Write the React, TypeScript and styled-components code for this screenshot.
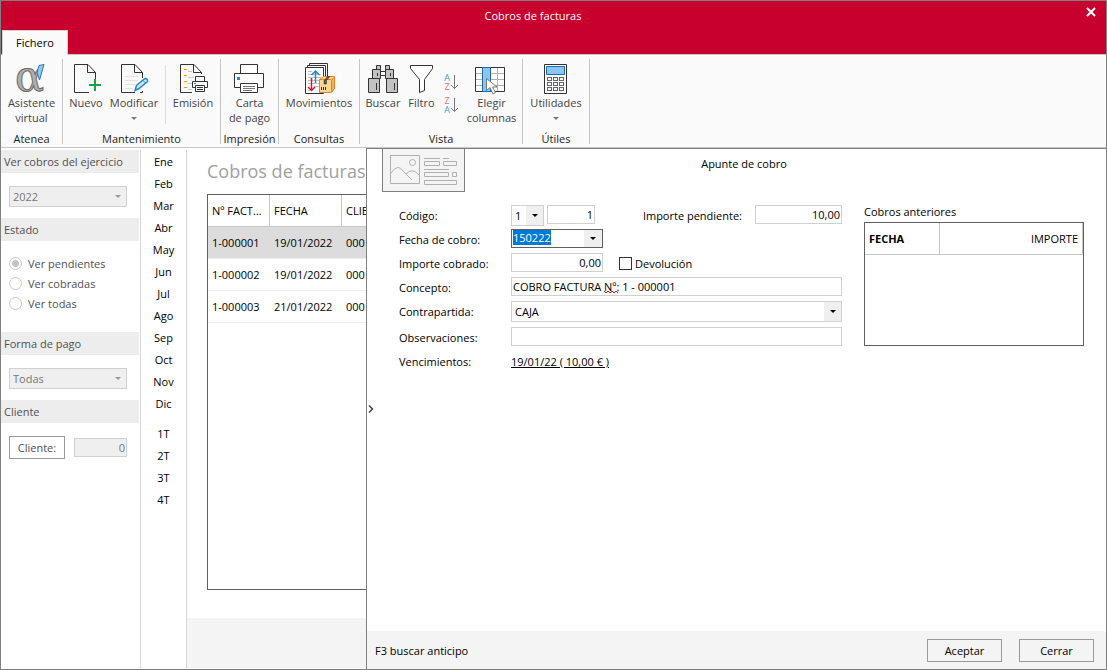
import React, { useEffect, useRef } from "react";
import styled, { createGlobalStyle } from "styled-components";

const GlobalStyle = createGlobalStyle`
  *, *::before, *::after { box-sizing: border-box; }
  body { margin: 0; }
  body, button, input, select, table {
    font-family: "Open Sans", "Noto Sans", sans-serif;
    font-size: 11px;
    line-height: 15px;
    color: #000;
  }
  button { padding: 0; margin: 0; border: 0; background: none; }
`;

/* ---------- window frame ---------- */

const Window = styled.div`
  display: flex;
  flex-direction: column;
  min-height: 100vh;
  border: 1px solid #808080;
  background: #fff;
`;

const Header = styled.header`
  background: #c8002d;
`;

const TitleBar = styled.div`
  display: grid;
  grid-template-columns: 1fr 41px;
  height: 29px;
`;

const WindowTitle = styled.h1`
  margin: 0;
  font-size: 11px;
  font-weight: 400;
  line-height: 30px;
  text-align: center;
  color: #fff;
`;

const CloseButton = styled.button`
  display: flex;
  align-items: center;
  justify-content: center;
  justify-self: end;
  width: 30px;
  height: 22px;
`;

const TabRow = styled.nav`
  display: flex;
  height: 24px;
  padding-left: 1px;
`;

const Tab = styled.button`
  position: relative;
  width: 66px;
  height: 25px;
  padding-bottom: 2px;
  border: 1px solid #d0d0d0;
  border-bottom: 0;
  background: #fafafa;
`;

/* ---------- ribbon ---------- */

const Ribbon = styled.div`
  display: flex;
  border-top: 1px solid #c6c6c6;
  border-bottom: 1px solid #c6c6c6;
  background: #fafafa;
`;

const RibbonGroup = styled.section<{ $endGap?: number }>`
  display: flex;
  flex-direction: column;
  padding-top: 8px;
`;

const RibbonItems = styled.div<{ $endGap?: number }>`
  display: flex;
  height: 68px;
  padding-right: ${(p) => p.$endGap ?? 0}px;
`;

const GroupName = styled.h2`
  margin: 0;
  font-size: 11px;
  font-weight: 400;
  line-height: 16px;
  text-align: center;
  white-space: nowrap;
  color: #222;
`;

const GroupDivider = styled.div`
  width: 1px;
  margin: 4px 0 3px;
  background: #c6c6c6;
`;

const ItemDivider = styled.div`
  width: 1px;
  margin: 2px 0 7px 6px;
  background: #dcdcdc;
`;

const RibbonButton = styled.button<{ $width: number }>`
  display: flex;
  flex-direction: column;
  align-items: center;
  width: ${(p) => p.$width}px;
  white-space: nowrap;
  color: #444;

  svg { flex: none; overflow: visible; }
`;

const MoreArrow = styled.i`
  margin-top: 7px;
  border: 3px solid transparent;
  border-top-color: #777;
  border-bottom: 0;
`;

const SortButtons = styled.div`
  display: flex;
  flex-direction: column;
  align-items: center;
  gap: 5px;
  width: 30px;
  padding-top: 10px;
`;

const SortButton = styled.button`
  width: 18px;
  height: 18px;

  svg { display: block; overflow: visible; }
`;

/* ---------- body ---------- */

const Body = styled.main`
  display: grid;
  grid-template-columns: 140px 46px 179px minmax(0, 1fr);
  flex: 1;
`;

const Filters = styled.aside`
  margin: 2px 0 1px;
  border-right: 1px solid #d8d8d8;
`;

const FilterTitle = styled.h3`
  margin: 0 1px 0 0;
  padding-left: 3px;
  font-size: 11px;
  font-weight: 400;
  line-height: 23px;
  color: #505050;
  background: #ededed;
`;

const FilterBody = styled.div<{ $top?: number; $bottom: number }>`
  padding: ${(p) => p.$top ?? 13}px 13px ${(p) => p.$bottom}px 8px;
`;

const RadioLabel = styled.label`
  display: flex;
  align-items: center;
  gap: 6px;
  height: 20px;
  color: #505050;
`;

const Radio = styled.input`
  appearance: none;
  width: 13px;
  height: 13px;
  margin: 0;
  border: 1px solid #c8c8c8;
  border-radius: 50%;
  background: #fff;

  &:checked {
    background: radial-gradient(circle, #c4c4c4 0 3px, #fff 4px);
  }
`;

const ClientRow = styled.div`
  display: flex;
  align-items: center;
  justify-content: space-between;
`;

const OutlineButton = styled.button<{ $width: number; $muted?: boolean }>`
  width: ${(p) => p.$width}px;
  height: 23px;
  border: 1px solid #9a9a9a;
  background: ${(p) => (p.$muted ? "#fff" : "#f4f4f4")};
  color: ${(p) => (p.$muted ? "#505050" : "#000")};
`;

const Periods = styled.nav`
  display: flex;
  flex-direction: column;
  gap: 8px;
  margin: 2px 0 1px;
  border-right: 1px solid #d8d8d8;
`;

const PeriodGroup = styled.div`
  display: flex;
  flex-direction: column;
`;

const Period = styled.button`
  height: 22px;
`;

/* ---------- invoice list ---------- */

const ListPane = styled.section`
  display: flex;
  flex-direction: column;
  overflow: hidden;
  padding-bottom: 1px;
`;

const ListTitle = styled.h2`
  margin: 11px 0;
  padding-left: 20px;
  font-size: 18px;
  font-weight: 400;
  line-height: 24px;
  white-space: nowrap;
  color: #a0a0a0;
`;

const ListFrame = styled.div`
  flex: 1;
  margin: 0 0 28px 20px;
  border: 1px solid #606060;
  border-right: 0;
  overflow: hidden;
`;

const InvoiceTable = styled.table`
  width: 360px;
  table-layout: fixed;
  border-collapse: separate;
  border-spacing: 0;

  th, td {
    height: 32px;
    padding: 0 4px 1px;
    font-weight: 400;
    text-align: left;
    white-space: nowrap;
    overflow: hidden;
    text-overflow: ellipsis;
    border-bottom: 1px solid #ececec;
  }
  th {
    border-right: 1px solid #c6c6c6;
    border-bottom-color: #c6c6c6;
  }
`;

const InvoiceRow = styled.tr<{ $selected?: boolean }>`
  background: ${(p) => (p.$selected ? "#dcdcdc" : "#fff")};
`;

const ListFooter = styled.div`
  height: 50px;
  background: #f4f4f4;
`;

/* ---------- payment drawer ---------- */

const Drawer = styled.section`
  display: flex;
  flex-direction: column;
  border-top: 1px solid #808080;
  border-left: 1px solid #808080;
`;

const DrawerMain = styled.div`
  display: grid;
  grid-template-columns: 15px minmax(0, 1fr);
  flex: 1;
`;

const CollapseHandle = styled.button`
  display: flex;
  align-items: center;
  padding: 38px 0 0 1px;
`;

const DrawerHeader = styled.div`
  display: grid;
  margin-bottom: 13px;

  > * { grid-area: 1 / 1; }
`;

const DrawerTitle = styled.h2`
  margin: 7px 0 0;
  font-size: 11px;
  font-weight: 400;
  line-height: 16px;
  text-align: center;
`;

const PreviewBadge = styled.div`
  width: 83px;
  height: 43px;
  border: 1px solid #808080;
  border-top: 0;
  background: #f4f4f4;

  svg { display: block; }
`;

const DrawerColumns = styled.div`
  display: flex;
  gap: 22px;
  padding: 0 22px 0 17px;
`;

const Form = styled.form`
  flex: 1;
  min-width: 0;
`;

const FormRow = styled.div<{ $tall?: boolean }>`
  display: flex;
  align-items: flex-start;
  height: ${(p) => (p.$tall ? 26 : 24)}px;
`;

const Label = styled.label`
  flex: none;
  width: 112px;
  line-height: 22px;
`;

const PendingLabel = styled.label`
  margin: 0 13px 0 auto;
  line-height: 22px;
`;

const Field = styled.input<{ $width?: number; $right?: boolean; $muted?: boolean }>`
  ${(p) => (p.$width ? `width: ${p.$width}px;` : "flex: 1; min-width: 0;")}
  height: 19px;
  padding: 0 1px 1px;
  border: 1px solid #d0d0d0;
  border-radius: 0;
  outline: 0;
  background: ${(p) => (p.$muted ? "#efefef" : "#fff")};
  color: ${(p) => (p.$muted ? "#777" : "#000")};
  text-align: ${(p) => (p.$right ? "right" : "left")};
`;

const CodeFields = styled.div`
  display: flex;
  align-items: flex-start;
  gap: 3px;
`;

const ConceptBox = styled.div`
  position: relative;
  display: flex;
  flex: 1;
`;

const Squiggle = styled.svg`
  position: absolute;
  left: 93px;
  top: 13px;
`;

const SelectBox = styled.div<{ $width?: number; $muted?: boolean }>`
  display: grid;
  grid-template-columns: minmax(0, 1fr) 17px;
  align-items: center;
  ${(p) => (p.$width ? `width: ${p.$width}px;` : "flex: 1;")}
  height: 21px;
  border: 1px solid #d0d0d0;
  background: ${(p) => (p.$muted ? "#efefef" : "#fff")};
`;

const Select = styled.select<{ $muted?: boolean }>`
  grid-area: 1 / 1 / 2 / 3;
  appearance: none;
  width: 100%;
  height: 19px;
  margin: 0;
  padding: 0 3px;
  border: 0;
  border-radius: 0;
  outline: 0;
  background: transparent;
  opacity: 1;
  color: ${(p) => (p.$muted ? "#777" : "#000")};
`;

const SelectArrow = styled.span<{ $muted?: boolean }>`
  grid-area: 1 / 2;
  display: flex;
  align-items: center;
  justify-content: center;
  height: 100%;
  background: #efefef;
  pointer-events: none;

  &::after {
    content: "";
    border: 3px solid transparent;
    border-top-color: ${(p) => (p.$muted ? "#999" : "#000")};
    border-bottom: 0;
  }
`;

const DateBox = styled.div`
  display: grid;
  grid-template-columns: minmax(0, 1fr) 18px;
  width: 92px;
  height: 19px;
  border: 1px solid #606060;
`;

const DateInput = styled.input`
  height: 15px;
  margin: 0;
  padding: 0 1px;
  border: 0;
  outline: 0;

  &::selection { background: #0078d7; color: #fff; }
`;

const DateButton = styled.button`
  display: grid;
  background: #efefef;

  &::after {
    content: "";
    place-self: center;
    border: 3px solid transparent;
    border-top-color: #000;
    border-bottom: 0;
  }
`;

const CheckLabel = styled.label`
  display: flex;
  align-items: center;
  gap: 3px;
  height: 21px;
  margin-left: 16px;
`;

const Checkbox = styled.input`
  appearance: none;
  width: 13px;
  height: 13px;
  margin: 0;
  border: 1px solid #333;
  background: #fff;
`;

const DueLink = styled.a`
  line-height: 22px;
  color: #000;
  text-decoration: underline;
`;

const Previous = styled.div`
  flex: none;
  width: 220px;
`;

const PreviousTitle = styled.h3`
  margin: 0 0 3px;
  font-size: 11px;
  font-weight: 400;
  line-height: 14px;
`;

const PreviousFrame = styled.div`
  height: 124px;
  border: 1px solid #606060;
`;

const PreviousTable = styled.table`
  width: 100%;
  table-layout: fixed;
  border-collapse: separate;
  border-spacing: 0;
`;

const PreviousHead = styled.th<{ $strong?: boolean }>`
  width: ${(p) => (p.$strong ? "75px" : "auto")};
  height: 32px;
  padding: 0 4px;
  border-right: 1px solid #c6c6c6;
  border-bottom: 1px solid #c6c6c6;
  font-weight: ${(p) => (p.$strong ? 700 : 400)};
  text-align: ${(p) => (p.$strong ? "left" : "right")};
`;

const DrawerFooter = styled.footer`
  display: flex;
  align-items: center;
  gap: 17px;
  height: 38px;
  padding: 0 12px 0 8px;
  background: #f4f4f4;
`;

const Hint = styled.span`
  flex: 1;
`;

/* ---------- icons ---------- */

type IconProps = { w?: number; children: React.ReactNode };

const Icon = ({ w = 32, children }: IconProps) => (
  <svg width={w} height={32} viewBox={`0 0 ${w} 32`} fill="none" stroke="#333" aria-hidden="true">
    {children}
  </svg>
);

const AlphaIcon = () => (
  <Icon w={31}>
    <text
      x="-1" y="28" fontSize="43" fontFamily="DejaVu Serif, serif"
      fill="#b0b0b0" stroke="#6a6a6a" strokeWidth="1"
    >α</text>
    <path d="M23 2.500 28 1.500 23.500 17 21 9.500Z" fill="#8fcaf5" stroke="#2a74b5" />
  </Icon>
);

const NewIcon = () => (
  <Icon>
    <path d="M19 29.500H4.500V1.500H18L25.500 9.500V17M17.500 1.500V9.500H25.500" />
    <path d="M19 22H31M25 16V28" stroke="#16a34a" strokeWidth="2" />
  </Icon>
);

const EditIcon = () => (
  <Icon>
    <path d="M17 29.500H3.500V1.500H17L24.500 9.500V15M16.500 1.500V9.500H24.500M24.500 28V29.500H22" />
    <path d="M7 13.500H20M7 17.500H20M7 21.500H17M7 25.500H15" stroke="#e2e2e2" />
    <path d="M17 27.500 18.500 22.500 27 15.500Q30 15.500 29.500 18.500L21 25.500Z" fill="#cde6f8" stroke="#2b87c8" strokeWidth="1.500" />
    <path d="M25 17.500 27.500 20" stroke="#2b87c8" />
  </Icon>
);

const EmitIcon = () => (
  <Icon>
    <path d="M15 29.500H3.500V1.500H17L24.500 9.500V11M16.500 1.500V9.500H24.500" />
    <path d="M7 6.500H10M7 12.500H10M7 18.500H10M7 24.500H10" stroke="#f09a1a" />
    <path d="M11 8.500H15M11 14.500H17M11 20.500H15M11 26.500H15" stroke="#c8c8c8" />
    <path d="M18.500 18V13.500H27.500V18M18.500 24.500H15.500V18.500H30.500V24.500H27.500" fill="#fafafa" />
    <path d="M18.500 22.500H27.500V28.500H18.500ZM20 24.500H26M20 26.500H26" fill="#fafafa" />
    <path d="M17 20.500H19" stroke="#2b87c8" />
  </Icon>
);

const PrinterIcon = () => (
  <Icon w={31}>
    <path d="M6.500 10.500V1.500H23.500V10.500" fill="#fff" />
    <path d="M6.500 24.500H.5V10.500H29.500V24.500H23.500" fill="#fff" />
    <path d="M6.500 20.500H23.500V29.500H6.500Z" fill="#fff" />
    <path d="M9 23.500H21M9 25.500H21M9 27.500H18" stroke="#777" />
    <path d="M3 14H6V17H3Z" fill="#2b87c8" stroke="none" />
  </Icon>
);

const MovesIcon = () => (
  <Icon>
    <path d="M6.500 2V.5H24.500V17M4.500 4V2.500H22.500V17" />
    <path d="M2.500 4.500H20.500V30.500H2.500Z" fill="#fff" />
    <path d="M5 8.500H9M5 11.500H18M5 14.500H18M5 17.500H16M5 20.500H16M11 23.500H16M5 27.500H7" stroke="#c0c0c0" />
    <path d="M12.500 20V8M8.500 12 12.500 8 16.500 12" stroke="#1d88cf" strokeWidth="1.500" />
    <path d="M8.500 15V27.500M5 24 8.500 27.500 12 24" stroke="#d9142b" strokeWidth="1.500" />
    <path d="M16.500 16.500 20.500 13.500H31.500V25.500L28.500 29.500H16.500Z" fill="#fbd690" stroke="#e5802a" />
    <path d="M28.500 29V17.500L31.500 14V25.500Z" fill="#f3b05e" stroke="#e5802a" />
    <path d="M17 16.500H28.500" stroke="#e5802a" />
    <path d="M21 17.500 24.500 13.500H27L23.500 17.500V21H21Z" fill="#555" stroke="#333" strokeWidth=".5" />
    <path d="M18.500 24V27M20.500 24V27M22.500 24V27" />
  </Icon>
);

const BinocularsIcon = () => (
  <Icon>
    <g fill="#c2c2c2">
      <path d="M9.500 2.500H13.500V6.500H9.500ZM18.500 2.500H22.500V6.500H18.500Z" />
      <path d="M5.500 6.500H13.500V15.500H5.500ZM18.500 6.500H26.500V15.500H18.500Z" />
      <path d="M1.500 15.500H12.500V29.500H1.500ZM19.500 15.500H30.500V29.500H19.500Z" />
    </g>
    <path d="M13.500 8.500H18.500V12.500H13.500Z" fill="#fff" />
    <path d="M9.500 20V27M27.500 20V27M10.500 10V13M23.500 10V13" />
  </Icon>
);

const FunnelIcon = () => (
  <Icon w={31}>
    <path d="M4.500 2.500H26.500V5.500L18.500 16.500V27.500L13.500 29.500V16.500L4.500 5.500Z" fill="#fff" />
  </Icon>
);

const SortIcon = ({ top, bottom }: { top: string; bottom: string }) => (
  <svg width="18" height="18" viewBox="0 0 18 18" fill="none" aria-hidden="true">
    <g fontSize="9" textAnchor="middle">
      <text x="4" y="8" fill={top === "A" ? "#4a9bd4" : "#ec6a6a"}>{top}</text>
      <text x="4" y="17" fill={bottom === "A" ? "#4a9bd4" : "#ec6a6a"}>{bottom}</text>
    </g>
    <path d="M11.500 2V15.500M8 12 11.500 15.500 15 12" stroke="#777" />
  </svg>
);

const ColumnsIcon = () => (
  <Icon w={33}>
    <path d="M.5 4.500H29.500V28.500H.5Z" fill="#fff" />
    <path d="M1 10.500H29M1 16.500H29M1 22.500H29M22.500 5V28" stroke="#b0b0b0" />
    <path d="M7.500 4.500H15.500V28.500H7.500Z" fill="#8cc5ef" stroke="#1a6db5" />
    <path d="M11.500 15.500V27.500L15 24.500 18 31 20.500 29.500 17.500 24H22Z" fill="#fff" stroke="#777" />
  </Icon>
);

const CalculatorIcon = () => (
  <Icon>
    <path d="M4.500 1.500H26.500V30.500H4.500Z" fill="#fff" />
    <path d="M6.500 3.500H24.500V11.500H6.500Z" fill="#8cc5ef" stroke="#1a6db5" />
    <g stroke="#666">
      {[14.5, 19.5, 24.5].map((y) =>
        [7.5, 13.5, 19.5].map((x) => <rect key={`${x}-${y}`} x={x} y={y} width="4" height="3" />)
      )}
    </g>
  </Icon>
);

/* ---------- data ---------- */

const months = ["Ene", "Feb", "Mar", "Abr", "May", "Jun", "Jul", "Ago", "Sep", "Oct", "Nov", "Dic"];
const quarters = ["1T", "2T", "3T", "4T"];
const states = ["Ver pendientes", "Ver cobradas", "Ver todas"];
const invoices = [
  { id: "1-000001", date: "19/01/2022", client: "00010" },
  { id: "1-000002", date: "19/01/2022", client: "00010" },
  { id: "1-000003", date: "21/01/2022", client: "00010" },
];

type DropDownProps = { id: string; label?: string; value: string; width?: number; muted?: boolean };

const DropDown = ({ id, label, value, width, muted }: DropDownProps) => (
  <SelectBox $width={width} $muted={muted}>
    <Select id={id} aria-label={label} disabled={muted} $muted={muted}>
      <option>{value}</option>
    </Select>
    <SelectArrow $muted={muted} />
  </SelectBox>
);

export default function App() {
  const dateRef = useRef<HTMLInputElement>(null);

  useEffect(() => {
    dateRef.current?.focus();
    dateRef.current?.select();
  }, []);

  return (
    <>
      <GlobalStyle />
      <Window>
        <Header>
          <TitleBar>
            <WindowTitle>Cobros de facturas</WindowTitle>
            <CloseButton type="button" aria-label="Cerrar ventana">
              <svg width="10" height="10" viewBox="0 0 10 10" stroke="#fff" strokeWidth="2">
                <path d="M1 1 9 9M9 1 1 9" />
              </svg>
            </CloseButton>
          </TitleBar>
          <TabRow>
            <Tab type="button">Fichero</Tab>
          </TabRow>
        </Header>

        <Ribbon>
          <RibbonGroup>
            <RibbonItems>
              <RibbonButton type="button" $width={61}><AlphaIcon /><span>Asistente<br />virtual</span></RibbonButton>
            </RibbonItems>
            <GroupName>Atenea</GroupName>
          </RibbonGroup>
          <GroupDivider />
          <RibbonGroup>
            <RibbonItems>
              <RibbonButton type="button" $width={46}><NewIcon />Nuevo</RibbonButton>
              <RibbonButton type="button" $width={50}><EditIcon />Modificar<MoreArrow /></RibbonButton>
              <ItemDivider />
              <RibbonButton type="button" $width={54}><EmitIcon />Emisión</RibbonButton>
            </RibbonItems>
            <GroupName>Mantenimiento</GroupName>
          </RibbonGroup>
          <GroupDivider />
          <RibbonGroup>
            <RibbonItems>
              <RibbonButton type="button" $width={57}><PrinterIcon /><span>Carta<br />de pago</span></RibbonButton>
            </RibbonItems>
            <GroupName>Impresión</GroupName>
          </RibbonGroup>
          <GroupDivider />
          <RibbonGroup>
            <RibbonItems>
              <RibbonButton type="button" $width={80}><MovesIcon />Movimientos</RibbonButton>
            </RibbonItems>
            <GroupName>Consultas</GroupName>
          </RibbonGroup>
          <GroupDivider />
          <RibbonGroup>
            <RibbonItems $endGap={6}>
              <RibbonButton type="button" $width={46}><BinocularsIcon />Buscar</RibbonButton>
              <RibbonButton type="button" $width={31}><FunnelIcon />Filtro</RibbonButton>
              <SortButtons>
                <SortButton type="button" aria-label="Orden ascendente"><SortIcon top="A" bottom="Z" /></SortButton>
                <SortButton type="button" aria-label="Orden descendente"><SortIcon top="Z" bottom="A" /></SortButton>
              </SortButtons>
              <RibbonButton type="button" $width={49}><ColumnsIcon /><span>Elegir<br />columnas</span></RibbonButton>
            </RibbonItems>
            <GroupName>Vista</GroupName>
          </RibbonGroup>
          <GroupDivider />
          <RibbonGroup>
            <RibbonItems>
              <RibbonButton type="button" $width={66}><CalculatorIcon />Utilidades<MoreArrow /></RibbonButton>
            </RibbonItems>
            <GroupName>Útiles</GroupName>
          </RibbonGroup>
          <GroupDivider />
        </Ribbon>

        <Body>
          <Filters>
            <FilterTitle>Ver cobros del ejercicio</FilterTitle>
            <FilterBody $bottom={11}>
              <DropDown id="year" label="Ejercicio" value="2022" muted />
            </FilterBody>
            <FilterTitle>Estado</FilterTitle>
            <FilterBody $top={12} $bottom={19}>
              {states.map((state, i) => (
                <RadioLabel key={state}>
                  <Radio type="radio" name="state" defaultChecked={i === 0} disabled />
                  {state}
                </RadioLabel>
              ))}
            </FilterBody>
            <FilterTitle>Forma de pago</FilterTitle>
            <FilterBody $bottom={11}>
              <DropDown id="payment" label="Forma de pago" value="Todas" muted />
            </FilterBody>
            <FilterTitle>Cliente</FilterTitle>
            <FilterBody $bottom={11}>
              <ClientRow>
                <OutlineButton type="button" $width={56} $muted>Cliente:</OutlineButton>
                <Field aria-label="Cliente" $width={53} $right $muted defaultValue="0" disabled />
              </ClientRow>
            </FilterBody>
          </Filters>

          <Periods>
            <PeriodGroup>{months.map((m) => <Period type="button" key={m}>{m}</Period>)}</PeriodGroup>
            <PeriodGroup>{quarters.map((q) => <Period type="button" key={q}>{q}</Period>)}</PeriodGroup>
          </Periods>

          <ListPane>
            <ListTitle>Cobros de facturas</ListTitle>
            <ListFrame>
              <InvoiceTable>
                <colgroup>
                  <col style={{ width: 62 }} />
                  <col style={{ width: 72 }} />
                  <col />
                </colgroup>
                <thead>
                  <tr><th>Nº FACTURA</th><th>FECHA</th><th>CLIENTE</th></tr>
                </thead>
                <tbody>
                  {invoices.map((row, i) => (
                    <InvoiceRow key={row.id} $selected={i === 0}>
                      <td>{row.id}</td><td>{row.date}</td><td>{row.client}</td>
                    </InvoiceRow>
                  ))}
                </tbody>
              </InvoiceTable>
            </ListFrame>
            <ListFooter />
          </ListPane>

          <Drawer>
            <DrawerMain>
              <CollapseHandle type="button" aria-label="Contraer panel">
                <svg width="6" height="8" viewBox="0 0 6 8" fill="none" stroke="#444" strokeWidth="1.500">
                  <path d="M1 .5 4.500 4 1 7.500" />
                </svg>
              </CollapseHandle>
              <div>
                <DrawerHeader>
                  <PreviewBadge>
                    <svg width="81" height="42" viewBox="0 0 81 42" fill="none" stroke="#b0b0b0" aria-hidden="true">
                      <path d="M7.500 6.500H36.500V34.500H7.500Z" />
                      <circle cx="29.500" cy="13.500" r="3" />
                      <path d="M8 24Q15 14 20 22L29 31M23 25Q29 18 36 26" />
                      <path d="M41 9.500H57M60 9.500H66M41 20.500H66" />
                      <path d="M41.500 12.500H56.500V16.500H41.500ZM60.500 12.500H73.500V16.500H60.500ZM41.500 23.500H65.500V27.500H41.500ZM69.500 23.500H73.500V27.500H69.500ZM41.500 31.500H73.500V35.500H41.500Z" />
                    </svg>
                  </PreviewBadge>
                  <DrawerTitle>Apunte de cobro</DrawerTitle>
                </DrawerHeader>

                <DrawerColumns>
                  <Form>
                    <FormRow>
                      <Label htmlFor="series">Código:</Label>
                      <CodeFields>
                        <DropDown id="series" value="1" width={33} />
                        <Field aria-label="Número" $width={48} $right defaultValue="1" />
                      </CodeFields>
                      <PendingLabel htmlFor="pending">Importe pendiente:</PendingLabel>
                      <Field id="pending" $width={87} $right defaultValue="10,00" />
                    </FormRow>
                    <FormRow>
                      <Label htmlFor="date">Fecha de cobro:</Label>
                      <DateBox>
                        <DateInput id="date" ref={dateRef} defaultValue="150222" />
                        <DateButton type="button" aria-label="Abrir calendario" />
                      </DateBox>
                    </FormRow>
                    <FormRow>
                      <Label htmlFor="amount">Importe cobrado:</Label>
                      <Field id="amount" $width={92} $right defaultValue="0,00" />
                      <CheckLabel><Checkbox type="checkbox" />Devolución</CheckLabel>
                    </FormRow>
                    <FormRow>
                      <Label htmlFor="concept">Concepto:</Label>
                      <ConceptBox>
                        <Field id="concept" defaultValue="COBRO FACTURA Nº: 1 - 000001" spellCheck={false} />
                        <Squiggle width="14" height="4" viewBox="0 0 14 4" fill="none" stroke="#e81123" aria-hidden="true">
                          <path d="M0 1 2 3 4 1 6 3 8 1 10 3 12 1 14 3" />
                        </Squiggle>
                      </ConceptBox>
                    </FormRow>
                    <FormRow $tall>
                      <Label htmlFor="account">Contrapartida:</Label>
                      <DropDown id="account" value="CAJA" />
                    </FormRow>
                    <FormRow>
                      <Label htmlFor="notes">Observaciones:</Label>
                      <Field id="notes" />
                    </FormRow>
                    <FormRow>
                      <Label as="span">Vencimientos:</Label>
                      <DueLink href="#vencimiento">19/01/22 ( 10,00 € )</DueLink>
                    </FormRow>
                  </Form>

                  <Previous>
                    <PreviousTitle>Cobros anteriores</PreviousTitle>
                    <PreviousFrame>
                      <PreviousTable>
                        <thead>
                          <tr>
                            <PreviousHead $strong>FECHA</PreviousHead>
                            <PreviousHead>IMPORTE</PreviousHead>
                          </tr>
                        </thead>
                      </PreviousTable>
                    </PreviousFrame>
                  </Previous>
                </DrawerColumns>
              </div>
            </DrawerMain>
            <DrawerFooter>
              <Hint>F3 buscar anticipo</Hint>
              <OutlineButton type="button" $width={75}>Aceptar</OutlineButton>
              <OutlineButton type="button" $width={75}>Cerrar</OutlineButton>
            </DrawerFooter>
          </Drawer>
        </Body>
      </Window>
    </>
  );
}
